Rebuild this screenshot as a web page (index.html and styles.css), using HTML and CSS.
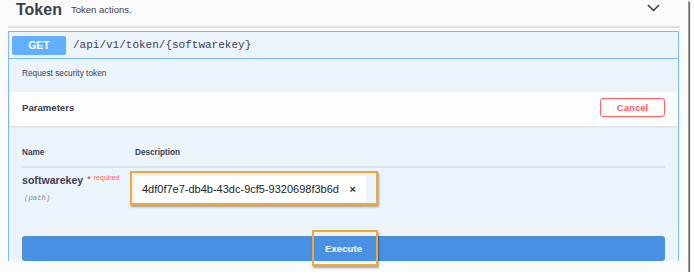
FILE: index.html
```html
<!DOCTYPE html>
<html>
  <head>
    <link rel="stylesheet" href="styles.css">
  </head>
  <body>
    <div class="shot">
      <div class="tag-header">
        <span class="tag-title">Token</span>
        <span class="tag-note">Token actions.</span>
        <svg class="chevron" width="13" height="8" viewBox="0 0 13 8">
          <polyline points="1,1 6.5,6.5 12,1" fill="none" stroke="#333" stroke-width="1.4"/>
        </svg>
      </div>

      <div class="opblock">
        <div class="summary">
          <span class="method">GET</span>
          <span class="path">/api/v1/token/{softwarekey}</span>
        </div>

        <div class="description">Request security token</div>

        <div class="params-head">
          <span class="params-title">Parameters</span>
          <button class="cancel-button">Cancel</button>
        </div>

        <div class="params-body">
          <div class="col-head">
            <span class="col-name">Name</span>
            <span>Description</span>
          </div>

          <div class="param-row">
            <div class="param-name">
              <div class="name-line">softwarekey<span class="star">*</span><span class="required">required</span></div>
              <div class="param-in">(path)</div>
            </div>
            <div class="param-value">
              <div class="input-box mark">
                <span class="input-text">4df0f7e7-db4b-43dc-9cf5-9320698f3b6d</span>
                <span class="clear">&times;</span>
              </div>
            </div>
          </div>

          <button class="execute-button"><span class="execute-label mark-exec">Execute</span></button>
        </div>
      </div>
    </div>
  </body>
</html>
```

FILE: styles.css
```css
body{
  margin: 0;
  background-color: white;
  font-family: "Liberation Sans", Arial, sans-serif;
  color: #3b4151;
}
.shot{
  width: 688px;
  height: 272px;
  padding: 0 8px;
  box-sizing: border-box;
  background-color: #fafafa;
  overflow: hidden;
  box-shadow: 1px 1px 0 #9a9a9a, 2px 2px 1px #6f6f6f;
}
.tag-header{
  display: flex;
  align-items: center;
  height: 20px;
  padding: 0 0 6px 8px;
  border-bottom: 2px solid #e0e0e0;
}
.tag-title{
  font-size: 16px;
  font-weight: bold;
  line-height: 20px;
}
.tag-note{
  font-size: 9.5px;
  margin-left: 9px;
  margin-top: -2px;
}
.chevron{
  margin-left: auto;
  margin-right: 20px;
  margin-top: -4px;
}
.opblock{
  margin: 3px 1px 0 0;
  border: 1px solid #7cbaf8;
  border-bottom: none;
  background-color: #ebf3fb;
}
.summary{
  display: flex;
  align-items: center;
  height: 26px;
  padding: 0 3px;
  border-bottom: 1px solid #7cbaf8;
}
.method{
  width: 54px;
  height: 19px;
  line-height: 19px;
  text-align: center;
  background-color: #61affe;
  color: white;
  font-size: 10.5px;
  font-weight: bold;
  border-radius: 2px;
}
.path{
  margin-left: 7px;
  font-family: "Liberation Mono", "Courier New", monospace;
  font-size: 11px;
  color: #3b4151;
}
.description{
  padding: 8px 13px 13px 13px;
  font-size: 8.3px;
  line-height: 12px;
}
.params-head{
  display: flex;
  align-items: center;
  justify-content: space-between;
  height: 30px;
  padding: 0 13px 4px 13px;
  background-color: rgba(255, 255, 255, 0.85);
  box-shadow: 0 1px 2px rgba(0, 0, 0, 0.1);
}
.params-title{
  font-size: 9.6px;
  font-weight: bold;
}
.cancel-button{
  width: 65px;
  height: 19px;
  padding: 0;
  border: 1.5px solid #ff6060;
  border-radius: 3px;
  background-color: white;
  color: #ff6060;
  font-family: "Liberation Sans", Arial, sans-serif;
  font-size: 9.6px;
  font-weight: bold;
}
.params-body{
  padding: 21px 13px 0 13px;
}
.col-head{
  display: flex;
  font-size: 8.2px;
  font-weight: bold;
  line-height: 12px;
  padding-bottom: 7px;
  border-bottom: 2px solid #dbe2ea;
}
.col-name{
  width: 113px;
}
.param-row{
  display: flex;
  padding-top: 8px;
}
.param-name{
  width: 113px;
}
.name-line{
  margin-top: -4px;
  font-size: 10.6px;
  font-weight: bold;
  line-height: 12px;
}
.star{
  color: #ff6060;
  font-size: 9px;
  margin-left: 4px;
  vertical-align: 2px;
}
.required{
  color: #ff6060;
  font-size: 7px;
  font-weight: normal;
  margin-left: 3px;
  vertical-align: 4px;
}
.param-in{
  margin: 8px 0 0 2px;
  font-family: "Liberation Mono", "Courier New", monospace;
  font-size: 7.3px;
  font-style: italic;
  color: #8a8a8a;
}
.input-box{
  position: relative;
  display: flex;
  align-items: center;
  width: 231px;
  height: 26px;
  padding: 0 7px;
  box-sizing: border-box;
  background-color: white;
  border-radius: 2px;
}
.input-text{
  font-size: 11px;
  color: #222;
}
.clear{
  margin-left: auto;
  margin-right: 3px;
  font-size: 11px;
  font-weight: bold;
  color: #333;
}
.mark::after{
  content: "";
  position: absolute;
  top: -5px;
  left: -5px;
  right: -12px;
  bottom: -3px;
  border: 2px solid #f4a833;
  box-shadow: 1px 2px 2px rgba(0, 0, 0, 0.35);
}
.execute-button{
  display: block;
  width: 643px;
  height: 25px;
  margin-top: 34px;
  padding: 0;
  border: none;
  border-radius: 3px;
  background-color: #4a90e2;
  color: white;
  font-family: "Liberation Sans", Arial, sans-serif;
  font-size: 9.7px;
  font-weight: bold;
}
.execute-label{
  position: relative;
  display: inline-block;
  line-height: 25px;
}
.mark-exec::after{
  content: "";
  position: absolute;
  top: -6px;
  bottom: -5px;
  left: -13px;
  right: -16px;
  border: 2px solid #f4a833;
  box-shadow: 1px 2px 2px rgba(0, 0, 0, 0.35);
}
```
